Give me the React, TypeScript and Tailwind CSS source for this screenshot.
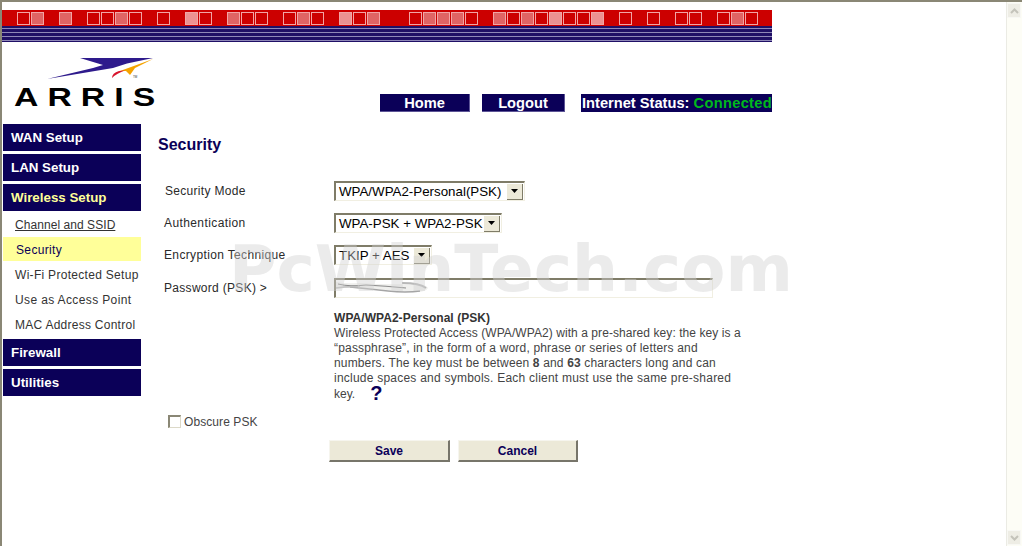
import React from 'react';

const pattern = 'om.m.oomo.o.lo.moo.omo.lom..ommmo.momolool.o.o.oo.omo';
const mainFont = "font-['Liberation_Sans',Arial,sans-serif]";

const Banner = () => (
  <div className="w-[770px] mt-[8px] shrink-0">
    <div className="h-[16px] bg-[#cc0000] pl-[15px] pt-[2px] flex gap-px">
      {pattern.split('').map((c, i) =>
        c === '.' ? (
          <div key={i} className="w-[13px] h-[13px]" />
        ) : (
          <div
            key={i}
            className={`w-[13px] h-[13px] border border-[#f2a5a5] ${c === 'm' ? 'bg-[#e06464]' : c === 'l' ? 'bg-[#ec9292]' : ''}`}
          />
        )
      )}
    </div>
    <div className="h-[16px] bg-[#1f0f66] flex flex-col pt-[2px] gap-[3px]">
      <div className="h-px bg-[#8f88b8]" />
      <div className="h-px bg-[#8f88b8]" />
      <div className="h-px bg-[#8f88b8]" />
      <div className="h-px bg-[#8f88b8]" />
    </div>
  </div>
);

const Logo = () => (
  <div className="w-[154px] ml-[12px] mb-[6px] shrink-0">
    <svg width="110" height="24" viewBox="0 0 110 24" className="block ml-[33px]">
      <path d="M33 0 L106 0 L80 5.5 L66 10 L0 21 L46 10 L56 7 Z" fill="#2e1a8c" />
      <path d="M106 1 L73 13 L79 13 L83 17 L88 10 Z" fill="#f5a300" />
      <path d="M65 20 Q65 15 72 13 L78 12.5 Q70 15 65 20 Z" fill="#d8142c" />
      <text x="86" y="20" fontSize="3" fill="#333">TM</text>
    </svg>
    <div className="h-[20px] mt-[4px] text-[25px] leading-[22px] text-black font-bold whitespace-nowrap">
      <span className="inline-block origin-left scale-x-[1.35] tracking-[6.7px]">ARRIS</span>
    </div>
  </div>
);

const NavItem = ({ w, children }: { w: string; children: React.ReactNode }) => (
  <div className={`${w} h-[18px] bg-[#0b0058] border-r border-b border-[#5c5496] text-white font-bold text-[14.67px] leading-[19px] text-center whitespace-nowrap`}>
    {children}
  </div>
);

const Header = () => (
  <div className="w-[770px] h-[82px] shrink-0 flex items-end pb-[12px]">
    <Logo />
    <div className="ml-[212px] flex">
      <NavItem w="w-[90px]">Home</NavItem>
      <div className="w-[12px]" />
      <NavItem w="w-[83px]">Logout</NavItem>
      <div className="w-[16px]" />
      <div className="w-[191px] h-[18px] bg-[#0b0058] font-bold text-[14.67px] leading-[19px] whitespace-nowrap pl-[1px] text-white">
        Internet Status: <span className="text-[#00b81c] tracking-[0.3px]">Connected</span>
      </div>
    </div>
  </div>
);

const MainLink = ({ label, active }: { label: string; active?: boolean }) => (
  <div className={`h-[27px] bg-[#0b0058] font-bold text-[13.33px] leading-[28px] pl-[8px] ${active ? 'text-[#ffff99]' : 'text-white'}`}>
    {label}
  </div>
);

const SubLink = ({ label, cur, under, track }: { label: string; cur?: boolean; under?: boolean; track?: string }) => (
  <div className={`${cur ? 'h-[24px] mb-px bg-[#ffff99] text-[#0b0058] pl-[13px] leading-[26px]' : 'h-[25px] text-[#333] pl-[12px] leading-[27px]'} text-[12px] whitespace-nowrap ${under ? 'underline' : ''} ${track ?? ''}`}>
    {label}
  </div>
);

const Sidebar = () => (
  <div className="w-[138px] ml-px shrink-0 flex flex-col">
    <MainLink label="WAN Setup" />
    <div className="h-[3px]" />
    <MainLink label="LAN Setup" />
    <div className="h-[3px]" />
    <MainLink label="Wireless Setup" active />
    <div className="pt-px pb-[2px]">
      <SubLink label="Channel and SSID" under track="tracking-[0.06px]" />
      <SubLink label="Security" cur track="tracking-[0.35px]" />
      <SubLink label="Wi-Fi Protected Setup" track="tracking-[0.3px]" />
      <SubLink label="Use as Access Point" track="tracking-[0.37px]" />
      <SubLink label="MAC Address Control" track="tracking-[0.26px]" />
    </div>
    <MainLink label="Firewall" />
    <div className="h-[3px]" />
    <MainLink label="Utilities" />
  </div>
);

const Select = ({ w, value }: { w: string; value: string }) => (
  <div className={`${w} h-[20px] border-t-2 border-l-2 border-[#7f7c68] border-b border-r border-b-[#f1efe2] border-r-[#f1efe2] flex items-center justify-between pl-[3px] pr-px text-[13.33px] text-black whitespace-nowrap`}>
    <span className="leading-[16px]">{value}</span>
    <div className="w-[16px] h-[16px] bg-[#ece9d8] border-r border-b border-[#7f7c68] flex items-center justify-center">
      <svg width="7" height="4" viewBox="0 0 7 4"><path d="M0 0h7L3.5 4z" fill="#000" /></svg>
    </div>
  </div>
);

const Row = ({ label, extra, children }: { label: string; extra?: string; children: React.ReactNode }) => (
  <div className="flex items-start h-[20px]">
    <div className={`w-[170px] ml-[6px] text-[12px] leading-[20px] text-[#2a2a2a] whitespace-nowrap ${extra ?? ''}`}>{label}</div>
    {children}
  </div>
);

const Scribble = () => (
  <svg width="93" height="15" viewBox="0 0 93 15" className="block">
    <path d="M0 2 Q10 4 22 3 Q50 5 78 4 Q90 4 92 8 Q90 13 74 12 Q50 10 30 8 Q12 7 0 9 Z" fill="#efefed" />
    <path d="M2 4 Q14 7 30 5 Q50 6 70 8" stroke="#8a8a8a" strokeWidth="1" fill="none" />
    <path d="M14 7 Q34 9 52 11 Q70 13 84 11" stroke="#a5a5a5" strokeWidth="1.5" fill="none" />
    <path d="M66 3 Q84 3 90 8" stroke="#b8b8b8" strokeWidth="2" fill="none" />
    <path d="M0 8 Q12 6 24 7" stroke="#bdbdbd" strokeWidth="1.5" fill="none" />
  </svg>
);

const Form = () => (
  <div className="flex-1 pl-[17px] pt-[12px]">
    <h1 className="text-[16px] leading-[18px] font-bold text-[#0b0058]">Security</h1>
    <div className="mt-[27px] flex flex-col gap-[12px]">
      <Row label="Security Mode" extra="pl-px tracking-[0.3px]">
        <Select w="w-[191px]" value="WPA/WPA2-Personal(PSK)" />
      </Row>
      <Row label="Authentication" extra="tracking-[0.4px]">
        <Select w="w-[168px]" value="WPA-PSK + WPA2-PSK" />
      </Row>
      <Row label="Encryption Technique" extra="tracking-[0.35px]">
        <Select w="w-[98px]" value="TKIP + AES" />
      </Row>
      <div className="mt-px">
        <Row label="Password (PSK) >" extra="tracking-[0.3px]">
          <div className="w-[379px] h-[20px] border-t-2 border-l-2 border-[#7f7c68] border-b border-r border-b-[#f1efe2] border-r-[#f1efe2]">
            <Scribble />
          </div>
        </Row>
      </div>
    </div>
    <div className="mt-[13px] ml-[176px] w-[420px] text-[12px] leading-[15px] text-[#444] whitespace-nowrap">
      <div className="font-bold text-[#333] tracking-[0.05px]">WPA/WPA2-Personal (PSK)</div>
      <div className="tracking-[0.07px]">Wireless Protected Access (WPA/WPA2) with a pre-shared key: the key is a</div>
      <div className="tracking-[0.18px]">“passphrase”, in the form of a word, phrase or series of letters and</div>
      <div className="tracking-[0.15px]">numbers. The key must be between <b>8</b> and <b>63</b> characters long and can</div>
      <div className="tracking-[0.23px]">include spaces and symbols. Each client must use the same pre-shared</div>
      <div className="flex items-start h-[15px] leading-[17px]">
        key.
        <span className="ml-[15px] -mt-[3px] text-[20px] leading-[20px] font-bold text-[#0b0058]">?</span>
      </div>
    </div>
    <div className="mt-[14px] ml-[10px] flex items-center h-[13px]">
      <div className="w-[13px] h-[13px] border-t-2 border-l-2 border-[#8a8775] border-r border-b border-r-[#dcd9c8] border-b-[#dcd9c8] bg-white" />
      <span className="ml-[3px] text-[12px] text-[#444] tracking-[0.08px]">Obscure PSK</span>
    </div>
    <div className="mt-[12px] ml-[171px] flex gap-[8px]">
      <button className="w-[121px] h-[22px] bg-[#ece9d8] border-r-2 border-b-2 border-[#77756a] border-t border-l border-t-[#f6f5ee] border-l-[#f6f5ee] text-[12px] font-bold text-[#0b0058]">Save</button>
      <button className="w-[120px] h-[22px] bg-[#ece9d8] border-r-2 border-b-2 border-[#77756a] border-t border-l border-t-[#f6f5ee] border-l-[#f6f5ee] text-[12px] font-bold text-[#0b0058]">Cancel</button>
    </div>
  </div>
);

const ScrollBar = () => (
  <div className="w-[16px] shrink-0 bg-[#fdfdf6] border-l border-[#ebebe4] flex flex-col justify-between py-px pr-px">
    <div className="h-[15px] bg-[#eeede5] border border-[#f8f8f4] flex items-center justify-center">
      <svg width="9" height="6" viewBox="0 0 9 6"><path d="M1 5l3.5-3.5L8 5" stroke="#c4c3ba" strokeWidth="2" fill="none" /></svg>
    </div>
    <div className="h-[15px] bg-[#eeede5] border border-[#f8f8f4] flex items-center justify-center">
      <svg width="9" height="6" viewBox="0 0 9 6"><path d="M1 1l3.5 3.5L8 1" stroke="#c4c3ba" strokeWidth="2" fill="none" /></svg>
    </div>
  </div>
);

export default function App() {
  return (
    <div className={`relative w-[1022px] h-[546px] overflow-hidden bg-white border-t-2 border-l-2 border-[#8a8775] flex ${mainFont}`}>
      <div className="flex-1 flex flex-col min-w-0">
        <Banner />
        <Header />
        <div className="flex">
          <Sidebar />
          <Form />
        </div>
      </div>
      <ScrollBar />
      {/* watermark from the screenshot sits over the form */}
      <div className="absolute left-[227px] top-[232px] text-[64.7px] leading-[70px] font-bold text-[#d1d1d1]/[0.43] pointer-events-none whitespace-nowrap font-['DejaVu_Sans',sans-serif]">
        PcWinTech.com
      </div>
    </div>
  );
}
